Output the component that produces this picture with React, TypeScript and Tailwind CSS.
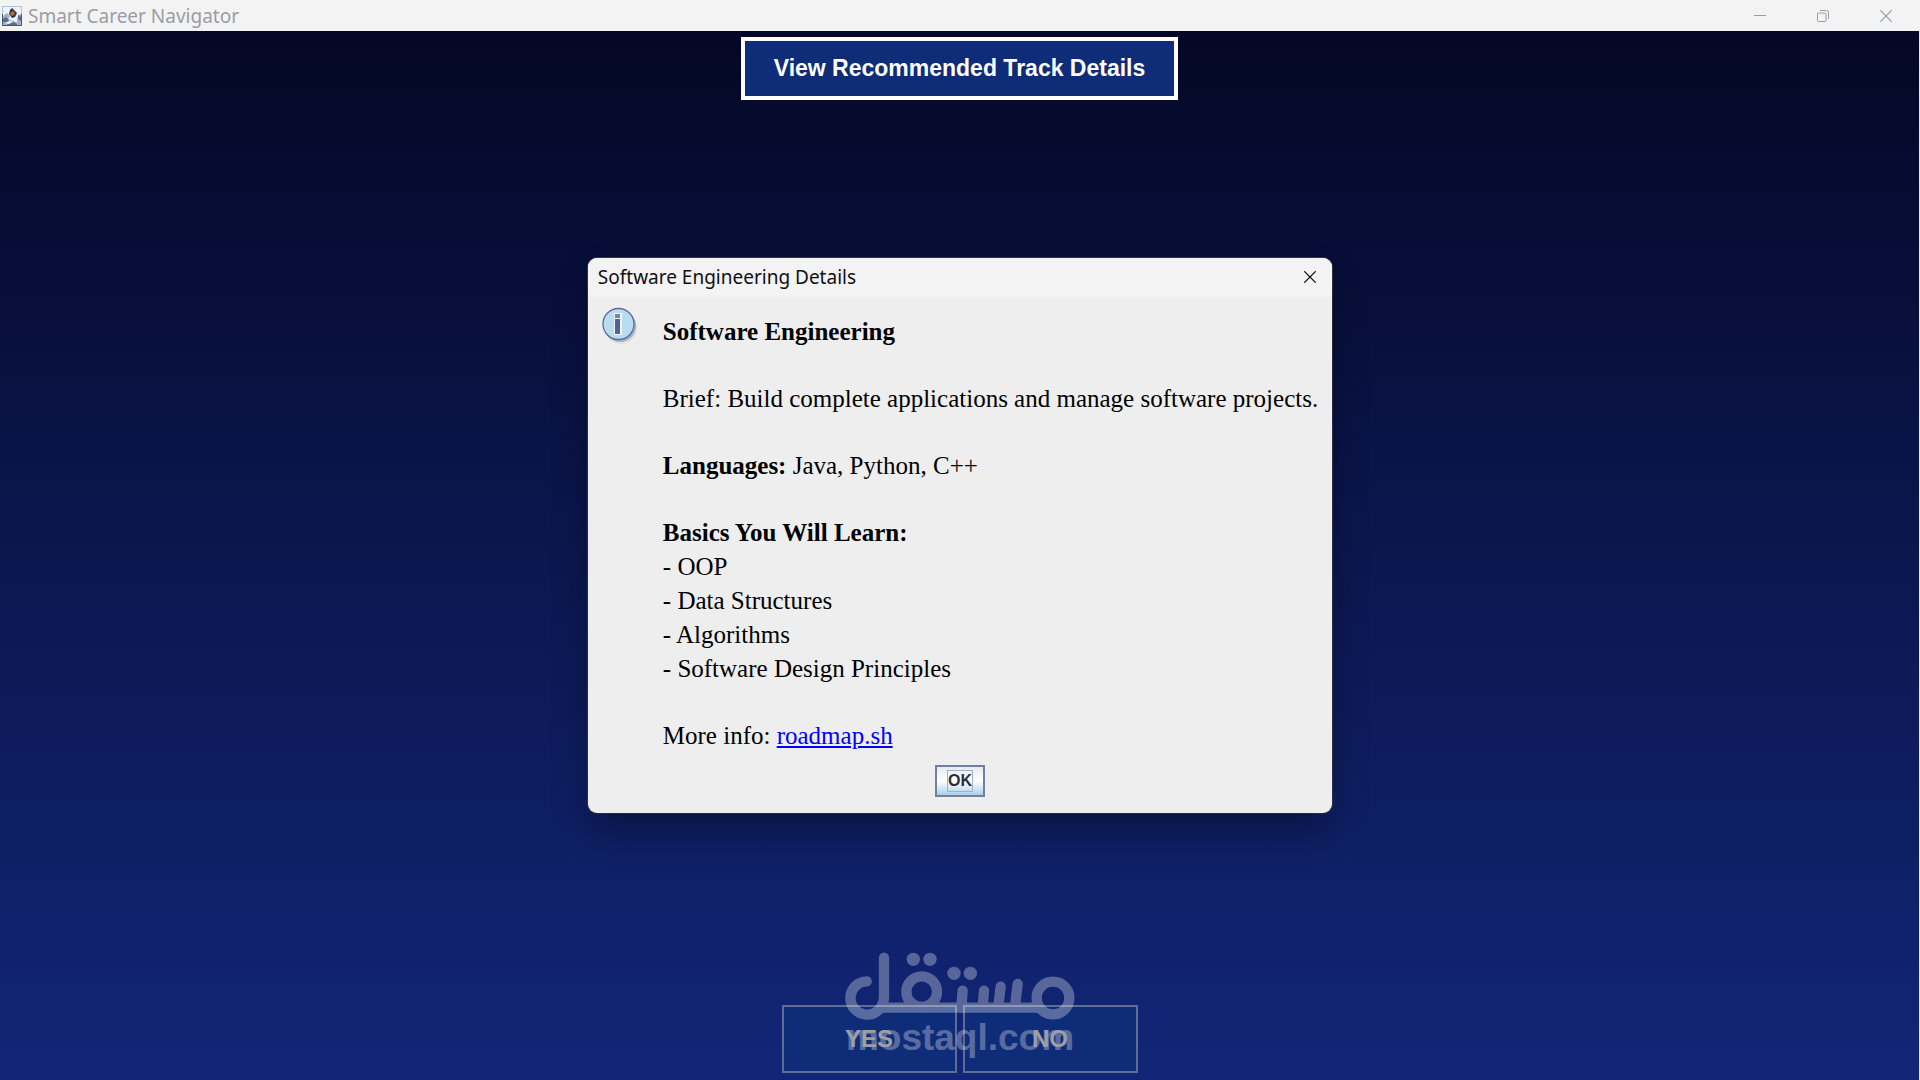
const basics = ["OOP", "Data Structures", "Algorithms", "Software Design Principles"];

function AppIcon() {
  return (
    <svg className="h-5 w-5" viewBox="0 0 20 20" aria-hidden="true">
      <rect width="20" height="20" fill="#edf3f8" />
      <rect x="0.5" y="0.5" width="19" height="19" fill="none" stroke="#a9c3dc" />
      <path d="M1 10l4-3 3 3-2 3 4 2 3-1 2 1 1-6 3-1v11H1z" fill="#a4afc2" />
      <path d="M1 13l3-2 3 3-2 2H1zM6 17l4-1 4 1 2 3H5zM16 9l3 2v4l-3-2z" fill="#5c6b8e" />
      <path d="M3 17l5-2 3 1-4 2zM11 12l3-1 1 6-3-2z" fill="#f4f7fa" />
      <path d="M10 2l5 5-2 4-3 1-3-4 1-4z" fill="#27335c" />
      <path d="M11 5l2 2-2 3-3-1 1-3z" fill="#c4661c" />
      <path d="M0.5 8v11.5h19V8" fill="none" stroke="#3d5682" />
    </svg>
  );
}

function CloseIcon() {
  return (
    <svg className="h-3 w-3" viewBox="0 0 12 12" stroke="currentColor" strokeWidth="1.2" aria-hidden="true">
      <path d="M0.3 0.3l11.4 11.4M11.7 0.3L0.3 11.7" />
    </svg>
  );
}

function InfoIcon() {
  return (
    <svg className="h-10 w-9" viewBox="0 0 36 40" aria-hidden="true">
      <circle cx="19" cy="21" r="16" fill="#d9d3bd" opacity="0.5" />
      <circle cx="18" cy="19" r="16" fill="#8ea3c4" opacity="0.8" />
      <circle cx="16.5" cy="17" r="15.5" fill="#b9dcef" stroke="#5b6b9c" strokeWidth="1.3" />
      <path d="M12 6h8v22h-8z" fill="#eaf4fa" />
      <path d="M13 7h5v4h-5z" fill="#7d8496" />
      <path d="M13 12h5v15h-5z" fill="#52639a" />
    </svg>
  );
}

function Watermark() {
  return (
    <div className="pointer-events-none absolute inset-x-0 bottom-0 flex h-32 flex-col items-center text-white opacity-30">
      <svg
        className="h-[69px] w-[230px] shrink-0"
        viewBox="255 65 690 207"
        fill="none"
        stroke="currentColor"
        strokeWidth="31"
        strokeLinecap="round"
        role="img"
        aria-label="مستقل"
      >
        <path d="M320 153A50 50 0 1 0 370 214Q372 208 372 198V82" />
        <path d="M355 232H847" strokeLinecap="butt" />
        <circle cx="485" cy="184" r="46" />
        <circle cx="879" cy="203" r="49" />
        <path d="M608 181L604 232M672 181L668 228M722 169L715 228M773 161L765 228" />
        <g fill="currentColor" stroke="none">
          <circle cx="460" cy="87" r="20" />
          <circle cx="510" cy="87" r="20" />
          <circle cx="582" cy="129" r="20" />
          <circle cx="631" cy="129" r="20" />
        </g>
      </svg>
      <span className="font-['Liberation_Sans',Arial,sans-serif] text-[37px] leading-[34px] font-bold">mostaql.com</span>
    </div>
  );
}

function DetailsDialog() {
  return (
    <div className="absolute inset-0 flex items-center justify-center pb-2.5">
      <div
        role="dialog"
        aria-labelledby="details-title"
        className="overflow-hidden rounded-[9px] bg-[#eeeeee] shadow-[0_20px_36px_rgba(0,0,0,0.3),0_0_0_1px_rgba(70,70,80,0.7)]"
      >
        <div className="flex h-[39px] items-center justify-between bg-[#f3f3f3] pr-4 pl-2.5">
          <h2 id="details-title" className="font-['Noto_Sans',sans-serif] text-[19px] leading-6 text-[#101010]">
            Software Engineering Details
          </h2>
          <button type="button" aria-label="Close" className="text-black">
            <CloseIcon />
          </button>
        </div>

        <div className="flex pt-[18px] pr-3.5 pl-3.5">
          <div className="-mt-2 w-[61px] shrink-0">
            <InfoIcon />
          </div>
          <div className="font-['Liberation_Serif','Times_New_Roman',serif] text-[25px] leading-[34px] text-black">
            <p className="mb-[33px] font-bold">Software Engineering</p>
            <p className="mb-[33px]">Brief: Build complete applications and manage software projects.</p>
            <p className="mb-[33px]">
              <b>Languages:</b> Java, Python, C++
            </p>
            <p className="font-bold">Basics You Will Learn:</p>
            <ul className="mb-[33px]">
              {basics.map((item) => (
                <li key={item}>- {item}</li>
              ))}
            </ul>
            <p>
              More info:{" "}
              <a href="#roadmap" className="text-[#0000ff] underline">
                roadmap.sh
              </a>
            </p>
          </div>
        </div>

        <div className="flex justify-center pt-3 pb-4">
          <button
            type="button"
            className="flex h-8 w-[50px] items-center justify-center border-2 border-[#71809f] bg-linear-to-b from-[#e4ebf0] via-white to-[#a9d0e8] font-['Liberation_Sans',Arial,sans-serif] text-base leading-5 font-bold text-[#2b2b3d]"
          >
            <span className="border border-[#9fb4cc]">OK</span>
          </button>
        </div>
      </div>
    </div>
  );
}

export default function App() {
  return (
    <div className="relative flex min-h-screen flex-col overflow-hidden">
      {/* Window title bar */}
      <header className="flex h-[31px] items-center justify-between bg-[#f3f3f3] pr-7 pl-0.5 text-[#999da6]">
        <div className="flex items-center gap-1.5">
          <AppIcon />
          <span className="font-['Noto_Sans',sans-serif] text-[19px] leading-6">Smart Career Navigator</span>
        </div>
        <div className="flex items-center gap-[51px]">
          <button type="button" aria-label="Minimize">
            <svg className="h-3 w-3" viewBox="0 0 12 12" stroke="currentColor" aria-hidden="true">
              <path d="M0 5.5h12" />
            </svg>
          </button>
          <button type="button" aria-label="Restore">
            <svg className="h-3 w-3" viewBox="0 0 12 12" fill="none" stroke="currentColor" aria-hidden="true">
              <rect x="0.5" y="3" width="8.5" height="8.5" rx="1" />
              <path d="M3 0.5h6.5a2 2 0 0 1 2 2V9" />
            </svg>
          </button>
          <button type="button" aria-label="Close" className="text-[#86a0b8]">
            <CloseIcon />
          </button>
        </div>
      </header>

      <main className="flex flex-1 flex-col items-center justify-between border-r border-[#e5e7ee] bg-linear-to-b/srgb from-[#040725] to-[#122678] pt-1.5 pb-[7px] font-['Liberation_Sans',Arial,sans-serif] font-bold">
        <button type="button" className="h-[63px] border-4 border-white bg-[#0f2c78] px-[29px] text-[23px] text-white">
          View Recommended Track Details
        </button>
        <div className="flex gap-1.5">
          <button type="button" className="h-[68px] w-[175px] border-2 border-[#5f6c98] bg-[#0f2c78] text-2xl text-[#9f9fa3]">
            <span className="relative z-10">YES</span>
          </button>
          <button type="button" className="h-[68px] w-[175px] border-2 border-[#5f6c98] bg-[#0f2c78] text-2xl text-[#9f9fa3]">
            <span className="relative z-10">NO</span>
          </button>
        </div>
      </main>

      <Watermark />
      <DetailsDialog />
    </div>
  );
}
